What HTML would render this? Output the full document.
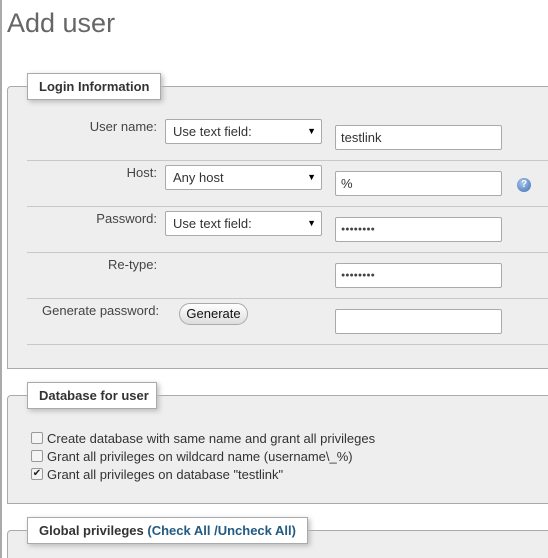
<!DOCTYPE html>
<html><head><style>
*{box-sizing:border-box;margin:0;padding:0}
html,body{width:548px;height:558px;overflow:hidden}
body{background:#fff;font-family:"Liberation Sans",Arial,sans-serif;font-size:13px;color:#444;position:relative}
.a{position:absolute}
.vl{left:0;top:0;width:2px;height:558px;background:#aaa}
h2{position:absolute;left:7px;top:8px;font-size:27px;font-weight:normal;color:#666}
.fs{position:absolute;left:7px;width:560px;background:#eee;border:1px solid #aaa;border-radius:4px 0 0 0}
.lg{position:absolute;left:27px;height:27px;background:#fff;border:1px solid #aaa;box-shadow:2px 2px 5px #bbb;font-weight:bold;color:#333;font-size:13px;line-height:25px;padding-left:11px}
.sep{position:absolute;left:27px;width:530px;height:1px;background:#c8c8c8}
.lbl{position:absolute;text-align:right;color:#444;font-size:13px}
.sel{position:absolute;left:165px;width:157px;height:25px;background:#fff;border:1px solid #aaa;border-radius:2px;padding-left:7px;line-height:23px;color:#333}
.sel:after{content:"▼";position:absolute;right:5px;top:0;font-size:9px;color:#000}
.inp{position:absolute;left:335px;width:167px;height:25px;background:#fff;border:1px solid #aaa;border-radius:2px;padding-left:5px;line-height:23px;color:#333}
.pw{font-size:7px;letter-spacing:0px;color:#444}
.cb{position:absolute;left:31px;width:12px;height:12px;border:1px solid #999;border-radius:2px;background:#f4f4f4}
.ct{position:absolute;left:47px;font-size:13px;color:#333}
</style></head><body>
<div class="a vl"></div>
<h2>Add user</h2>

<div class="fs" style="top:86px;height:283px"></div>
<div class="lg" style="top:73px;width:134px">Login Information</div>
<div class="sep" style="top:160px"></div>
<div class="sep" style="top:206px"></div>
<div class="sep" style="top:252px"></div>
<div class="sep" style="top:298px"></div>
<div class="sep" style="top:344px"></div>

<div class="lbl" style="right:391px;top:119px">User name:</div>
<div class="sel" style="top:119px">Use text field:</div>
<div class="inp" style="top:125px">testlink</div>

<div class="lbl" style="right:391px;top:165px">Host:</div>
<div class="sel" style="top:165px">Any host</div>
<div class="inp" style="top:171px">%</div>
<div class="a" style="left:517px;top:178px;width:14px;height:14px;border-radius:50%;background:radial-gradient(circle at 40% 35%,#a8c8ee,#3d6db0);color:#fff;font-size:10px;font-weight:bold;text-align:center;line-height:14px">?</div>

<div class="lbl" style="right:391px;top:211px">Password:</div>
<div class="sel" style="top:211px">Use text field:</div>
<div class="inp pw" style="top:217px">●●●●●●●●</div>

<div class="lbl" style="left:108px;top:257px">Re-type:</div>
<div class="inp pw" style="top:263px">●●●●●●●●</div>

<div class="lbl" style="left:42px;top:303px">Generate password:</div>
<div class="a" style="left:179px;top:303px;width:69px;height:22px;border:1px solid #aaa;border-radius:11px;background:linear-gradient(#fff,#ddd);color:#111;text-align:center;line-height:20px">Generate</div>
<div class="inp" style="top:309px"></div>

<div class="fs" style="top:395px;height:109px"></div>
<div class="lg" style="top:382px;width:130px">Database for user</div>
<div class="cb" style="top:432px"></div><div class="ct" style="top:431px">Create database with same name and grant all privileges</div>
<div class="cb" style="top:450px"></div><div class="ct" style="top:449px">Grant all privileges on wildcard name (username\_%)</div>
<div class="cb" style="top:468px;font-size:10px;line-height:10px;color:#222;text-align:center">✔</div><div class="ct" style="top:467px">Grant all privileges on database "testlink"</div>

<div class="fs" style="top:530px;height:40px"></div>
<div class="lg" style="top:517px;width:281px">Global privileges <span style="color:#235a81">(Check All /Uncheck All)</span></div>
</body></html>
